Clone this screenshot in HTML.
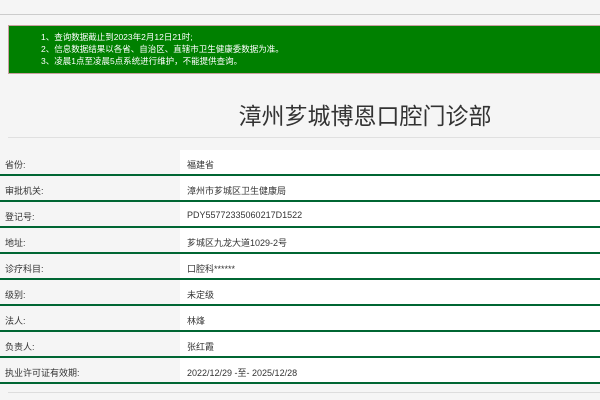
<!DOCTYPE html>
<html><head><meta charset="utf-8"><style>
body{margin:0;width:600px;height:400px;background:#f5f5f5;font-family:"Liberation Sans","Noto Sans CJK SC",sans-serif;position:relative;overflow:hidden}
.top{position:absolute;left:0;top:14px;width:600px;height:1px;background:#ccc}
.notice{position:absolute;left:8px;top:25px;width:600px;height:49px;background:#008000;border:1px solid #c9a0a0;box-sizing:border-box;color:#fff;font-size:8.5px;line-height:12px;padding:5px 0 0 32px}
h1{position:absolute;left:0;right:0;margin:0;top:97px;font-weight:normal;font-size:23px;color:#333;text-align:center;padding-left:130px;font-family:"Liberation Sans","Noto Sans CJK SC",sans-serif}
.l1{position:absolute;left:8px;top:137px;width:592px;height:1px;background:#e0e0e0}
.l2{position:absolute;left:8px;top:392px;width:592px;height:1px;background:#ddd}
.row{position:absolute;left:0;width:600px;height:26px;border-bottom:2px solid #006633;box-sizing:border-box;font-size:9px;color:#333}
.row .k{position:absolute;left:5px;top:8px}
.row .v{position:absolute;left:180px;top:0;right:0;height:24px;background:#fff;padding:8px 0 0 7px;box-sizing:border-box}
</style></head><body>
<div class="top"></div>
<div class="notice">1、查询数据截止到2023年2月12日21时;<br>2、信息数据结果以各省、自治区、直辖市卫生健康委数据为准。<br>3、凌晨1点至凌晨5点系统进行维护，不能提供查询。</div>
<h1>漳州芗城博恩口腔门诊部</h1>
<div class="l1"></div>
<div class="row" style="top:150px"><span class="k">省份:</span><div class="v">福建省</div></div>
<div class="row" style="top:176px"><span class="k">审批机关:</span><div class="v">漳州市芗城区卫生健康局</div></div>
<div class="row" style="top:202px"><span class="k">登记号:</span><div class="v">PDY55772335060217D1522</div></div>
<div class="row" style="top:228px"><span class="k">地址:</span><div class="v">芗城区九龙大道1029-2号</div></div>
<div class="row" style="top:254px"><span class="k">诊疗科目:</span><div class="v">口腔科******</div></div>
<div class="row" style="top:280px"><span class="k">级别:</span><div class="v">未定级</div></div>
<div class="row" style="top:306px"><span class="k">法人:</span><div class="v">林烽</div></div>
<div class="row" style="top:332px"><span class="k">负责人:</span><div class="v">张红霞</div></div>
<div class="row" style="top:358px"><span class="k">执业许可证有效期:</span><div class="v">2022/12/29 -至- 2025/12/28</div></div>
<div class="l2"></div>
</body></html>
